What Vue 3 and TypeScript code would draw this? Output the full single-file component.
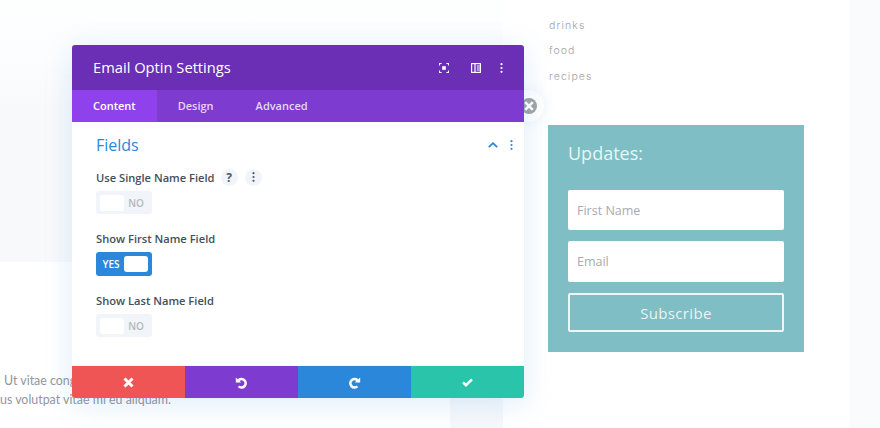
<script setup lang="ts">
const links = ['drinks', 'food', 'recipes']

const fields = [
  { label: 'Use Single Name Field', on: false, help: true },
  { label: 'Show First Name Field', on: true, help: false },
  { label: 'Show Last Name Field', on: false, help: false },
]

const tabs = ['Content', 'Design', 'Advanced']
</script>

<template>
  <div class="page">
    <div class="left-col">
      <div class="band-top"></div>
      <div class="band-bottom">
        <div class="band-text">
          <p>Ut vitae cong</p>
          <p>us volutpat vitae mi eu aliquam.</p>
        </div>
        <div class="band-slice"></div>
      </div>
    </div>

    <div class="right-col">
      <ul class="links">
        <li v-for="l in links" :key="l">{{ l }}</li>
      </ul>
      <div class="optin">
        <h3>Updates:</h3>
        <div class="input">First Name</div>
        <div class="input">Email</div>
        <div class="subscribe">Subscribe</div>
      </div>
    </div>
    <div class="edge-col"></div>

    <!-- Poignee ronde sous le bord de la fenetre -->
    <div class="handle">
      <svg width="16" height="16" viewBox="0 0 16 16">
        <circle cx="8" cy="8" r="8" fill="#a3a3a3" />
        <path d="M4.2 4.2l7.6 7.6M11.8 4.2l-7.6 7.6" stroke="#fff" stroke-width="2.6" />
      </svg>
    </div>

    <!-- Fenetre de reglages -->
    <div class="modal">
      <div class="modal-head">
        <span class="modal-title">Email Optin Settings</span>
        <div class="head-icons">
          <svg width="10" height="10" viewBox="0 0 10 10" fill="none" stroke="#fff" stroke-width="1.1">
            <path d="M.5 2.6V.5h2.1M7.4 .5h2.1v2.1M9.5 7.4v2.1H7.4M2.6 9.5H.5V7.4" />
            <rect x="3.2" y="3.2" width="3.6" height="3.6" fill="#fff" stroke="none" />
          </svg>
          <svg width="10" height="10" viewBox="0 0 10 10" fill="none" stroke="#fff" stroke-width="1.2">
            <rect x=".6" y=".6" width="8.8" height="8.8" />
            <path d="M4 .6v8.8M5.8 3h3M5.8 5h3M5.8 7h3" />
          </svg>
          <svg class="head-dots" width="3" height="10" viewBox="0 0 3 10" fill="#fff">
            <circle cx="1.5" cy="1.2" r="1.1" />
            <circle cx="1.5" cy="5" r="1.1" />
            <circle cx="1.5" cy="8.8" r="1.1" />
          </svg>
        </div>
      </div>

      <div class="modal-tabs">
        <span v-for="(t, i) in tabs" :key="t" class="tab" :class="{ active: i === 0 }">{{ t }}</span>
      </div>

      <div class="modal-body">
        <div class="group-head">
          <span class="group-title">Fields</span>
          <div class="group-icons">
            <svg width="10" height="6" viewBox="0 0 10 6" fill="none" stroke="#2b87da" stroke-width="1.8">
              <path d="M.8 5.2 5 1.2l4.2 4" />
            </svg>
            <svg width="3" height="10" viewBox="0 0 3 10" fill="#2b87da">
              <circle cx="1.5" cy="1.2" r="1.1" />
              <circle cx="1.5" cy="5" r="1.1" />
              <circle cx="1.5" cy="8.8" r="1.1" />
            </svg>
          </div>
        </div>

        <div v-for="f in fields" :key="f.label" class="field">
          <div class="field-label">
            <span>{{ f.label }}</span>
            <template v-if="f.help">
              <span class="round-btn help">?</span>
              <span class="round-btn">
                <svg width="3" height="10" viewBox="0 0 3 10" fill="#4c5866">
                  <circle cx="1.5" cy="1.2" r="1.1" />
                  <circle cx="1.5" cy="5" r="1.1" />
                  <circle cx="1.5" cy="8.8" r="1.1" />
                </svg>
              </span>
            </template>
          </div>
          <div class="toggle" :class="{ on: f.on }">
            <template v-if="f.on">
              <span class="toggle-text">YES</span>
              <span class="knob"></span>
            </template>
            <template v-else>
              <span class="knob"></span>
              <span class="toggle-text">NO</span>
            </template>
          </div>
        </div>
      </div>

      <div class="modal-foot">
        <div class="foot-btn red">
          <svg width="11" height="11" viewBox="0 0 11 11" fill="none" stroke="#fff" stroke-width="3">
            <path d="M1.5 1.5l8 8M9.5 1.5l-8 8" />
          </svg>
        </div>
        <div class="foot-btn purple">
          <svg width="13" height="13" viewBox="0 0 13 13" fill="none">
            <path d="M3.6 4.2A4.2 4.2 0 1 1 3.6 10.4" stroke="#fff" stroke-width="2.6" />
            <path d="M.8 1.4v5h5.4z" fill="#fff" />
          </svg>
        </div>
        <div class="foot-btn blue">
          <svg width="13" height="13" viewBox="0 0 13 13" fill="none">
            <path d="M9.4 4.2A4.2 4.2 0 1 0 9.4 10.4" stroke="#fff" stroke-width="2.6" />
            <path d="M12.2 1.4v5H6.8z" fill="#fff" />
          </svg>
        </div>
        <div class="foot-btn green">
          <svg width="11" height="9" viewBox="0 0 11 9" fill="none" stroke="#fff" stroke-width="2.6">
            <path d="M1 4.4l3 2.8L10 1.4" />
          </svg>
        </div>
      </div>
    </div>
  </div>
</template>

<style>
html,
body {
  margin: 0;
  background: #fff;
}
</style>

<style scoped>
.page {
  position: relative;
  width: 880px;
  height: 428px;
  overflow: hidden;
  display: flex;
  background: #fff;
  font-family: "Open Sans", sans-serif;
}

.left-col {
  width: 503px;
  flex: none;
  display: flex;
  flex-direction: column;
}

.band-top {
  height: 262px;
  background: linear-gradient(to bottom, #fdfefe 0, #fcfdfe 60px, #f8f9fb 110px, #f8f9fb 100%);
}

.band-bottom {
  flex: 1;
  display: flex;
  justify-content: space-between;
}

.band-text {
  padding-top: 109px;
  font-family: Lato, sans-serif;
  font-size: 12.4px;
  color: #9295a0;
  line-height: 19px;
  white-space: nowrap;
}

.band-text p {
  margin: 0;
}

.band-text p:first-child {
  padding-left: 4px;
}

.band-slice {
  width: 53px;
  background: #f6f8fb;
}

.right-col {
  width: 347px;
  flex: none;
  padding: 13px 0 0 45px;
  box-sizing: border-box;
}

.edge-col {
  flex: 1;
  background: #f9fbfc;
}

.links {
  list-style: none;
  margin: 0;
  padding: 0;
  font-family: Inter, sans-serif;
  font-weight: 300;
  font-size: 10.5px;
  letter-spacing: 1.1px;
  line-height: 25.4px;
  color: #a0a2ac;
}

.links li {
  padding-left: 1px;
}

.optin {
  margin-top: 35.8px;
  width: 256px;
  height: 227px;
  box-sizing: border-box;
  background: #7ebec4;
  padding: 15px 20px;
  color: #fff;
}

.optin h3 {
  margin: 0 0 23px;
  font-size: 18px;
  font-weight: 400;
  line-height: 27px;
  color: #e9f5f6;
}

.input {
  height: 40px;
  box-sizing: border-box;
  margin-bottom: 11px;
  padding: 1px 0 0 9px;
  background: #fff;
  border-radius: 2px;
  font-size: 12.5px;
  line-height: 39px;
  color: #a9a9b3;
}

.input + .input {
  height: 41px;
  line-height: 40px;
}

.subscribe {
  height: 39px;
  box-sizing: border-box;
  border: 2px solid #ecf6f7;
  border-radius: 2px;
  text-align: center;
  font-size: 15px;
  line-height: 36px;
  letter-spacing: .35px;
  color: #e9f5f6;
}

.modal {
  position: absolute;
  left: 72px;
  top: 45px;
  width: 452px;
  height: 353px;
  display: flex;
  flex-direction: column;
  border-radius: 3px;
  background: #fff;
  box-shadow: 0 5px 30px rgba(43, 135, 218, .16);
}

.modal-head {
  height: 45px;
  flex: none;
  display: flex;
  align-items: center;
  justify-content: space-between;
  padding: 0 21px;
  background: #6a2fb5;
  border-radius: 3px 3px 0 0;
  color: #fff;
}

.modal-title {
  font-size: 14.7px;
  font-weight: 500;
  padding-bottom: 2px;
}

.head-icons {
  display: flex;
  align-items: center;
  gap: 22px;
}

.head-dots {
  margin-left: -3px;
}

.modal-tabs {
  height: 32px;
  flex: none;
  display: flex;
  background: #7e3bd0;
}

.tab {
  padding: 0 21px;
  font-size: 11px;
  font-weight: 600;
  line-height: 32px;
  color: #e4d6f6;
}

.tab.active {
  background: #8f42ec;
  color: #fff;
}

.modal-body {
  flex: 1;
  padding: 0 24px;
  border-bottom: 1px solid #f5f6f8;
}

.group-head {
  display: flex;
  align-items: center;
  justify-content: space-between;
  height: 46px;
  padding-bottom: 1px;
  box-sizing: border-box;
}

.group-title {
  font-size: 16px;
  color: #2b87da;
}

.group-icons {
  display: flex;
  align-items: center;
  gap: 12px;
  margin-right: -13px;
}

.field {
  margin-bottom: 15px;
}

.field-label {
  display: flex;
  align-items: center;
  height: 18px;
  margin-bottom: 5px;
  font-size: 11.15px;
  font-weight: 600;
  color: #454f5a;
}

.field-label span:first-child {
  margin-right: 6px;
}

.round-btn {
  width: 17px;
  height: 17px;
  margin-right: 7px;
  border-radius: 50%;
  background: #f1f5f9;
  display: flex;
  align-items: center;
  justify-content: center;
}

.help {
  font-size: 12px;
  font-weight: 700;
  color: #4c5866;
}

.toggle {
  width: 56px;
  height: 23px;
  box-sizing: border-box;
  padding: 4px;
  display: flex;
  align-items: center;
  justify-content: space-between;
  border-radius: 3px;
  background: #f1f5f9;
}

.toggle.on {
  height: 24px;
  background: #2b87da;
}

.knob {
  width: 24px;
  height: 16px;
  border-radius: 3px;
  background: #fff;
}

.toggle-text {
  flex: 1;
  text-align: center;
  font-size: 10px;
  font-weight: 600;
  color: #b2b8bf;
}

.toggle.on .toggle-text {
  color: #fff;
  padding-right: 2px;
}

.modal-foot {
  height: 32px;
  flex: none;
  display: flex;
}

.foot-btn {
  flex: 1;
  display: flex;
  align-items: center;
  justify-content: center;
}

.red {
  background: #ef5555;
  border-radius: 0 0 0 3px;
}

.purple {
  background: #7e3bd0;
}

.blue {
  background: #2b87da;
}

.green {
  background: #29c4a9;
  border-radius: 0 0 3px 0;
}

.handle {
  position: absolute;
  left: 512px;
  top: 90px;
  width: 32px;
  height: 32px;
  border-radius: 50%;
  background: #fff;
  box-shadow: 0 0 12px rgba(43, 135, 218, .1);
  display: flex;
  align-items: center;
  justify-content: center;
  padding-left: 1px;
  box-sizing: border-box;
}
</style>
